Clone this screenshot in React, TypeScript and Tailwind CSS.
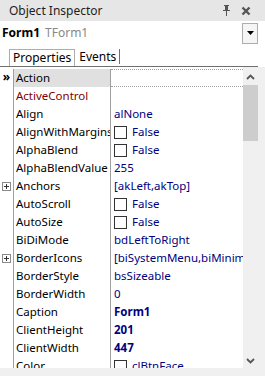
import React from 'react';

type Row = {
  name: string;
  value?: string;
  kind?: 'text' | 'check' | 'bold' | 'color';
  gutter?: 'arrow' | 'plus';
  nameClass?: string;
  selected?: boolean;
};

const rows: Row[] = [
  { name: 'Action', gutter: 'arrow', selected: true },
  { name: 'ActiveControl', nameClass: 'text-[#800000]' },
  { name: 'Align', value: 'alNone' },
  { name: 'AlignWithMargins', value: 'False', kind: 'check' },
  { name: 'AlphaBlend', value: 'False', kind: 'check' },
  { name: 'AlphaBlendValue', value: '255' },
  { name: 'Anchors', value: '[akLeft,akTop]', gutter: 'plus' },
  { name: 'AutoScroll', value: 'False', kind: 'check' },
  { name: 'AutoSize', value: 'False', kind: 'check' },
  { name: 'BiDiMode', value: 'bdLeftToRight' },
  { name: 'BorderIcons', value: '[biSystemMenu,biMinimize,biMaximize]', gutter: 'plus' },
  { name: 'BorderStyle', value: 'bsSizeable' },
  { name: 'BorderWidth', value: '0' },
  { name: 'Caption', value: 'Form1', kind: 'bold' },
  { name: 'ClientHeight', value: '201', kind: 'bold' },
  { name: 'ClientWidth', value: '447', kind: 'bold' },
  { name: 'Color', value: 'clBtnFace', kind: 'color' },
];

function Gutter({ type }: { type?: Row['gutter'] }) {
  if (type === 'arrow')
    return <span className="text-[12px] leading-none text-black font-bold -mt-[2px]">»</span>;
  if (type === 'plus')
    return (
      <svg width="9" height="9" viewBox="0 0 9 9">
        <rect x="0.5" y="0.5" width="8" height="8" fill="#fff" stroke="#8a8a8a" />
        <path d="M2 4.5h5M4.5 2v5" stroke="#333" strokeWidth="1" />
      </svg>
    );
  return null;
}

function Value({ row }: { row: Row }) {
  if (!row.value) return null;
  if (row.kind === 'check' || row.kind === 'color')
    return (
      <span className="flex items-center gap-[5px]">
        <span className="w-[13px] h-[13px] border border-[#333] bg-white shrink-0" />
        <span>{row.value}</span>
      </span>
    );
  return <span className={row.kind === 'bold' ? 'font-bold' : ''}>{row.value}</span>;
}

export default function App() {
  return (
    <div
      className="w-[265px] h-[376px] overflow-hidden bg-white flex flex-col text-[11.5px] text-black"
      style={{ fontFamily: '"Segoe UI", "Noto Sans", Arial, sans-serif' }}
    >
      {/* title bar */}
      <div className="h-[21px] shrink-0 bg-[#e6e6e6] flex items-center pl-[9px] pr-[14px] text-[12px]">
        <span className="flex-1 text-[#1e1e1e]">Object Inspector</span>
        <svg width="9" height="11" viewBox="0 0 9 11" className="mr-[10px]">
          <path d="M2 0h5v1H6v4h2v1H5v5H4V6H1V5h2V1H2z" fill="#555" />
        </svg>
        <svg width="10" height="10" viewBox="0 0 10 10">
          <path d="M1.5 1.5l7 7M8.5 1.5l-7 7" stroke="#555" strokeWidth="2.4" />
        </svg>
      </div>

      {/* component combo */}
      <div className="h-[24px] shrink-0 flex items-center pl-[2px] text-[12px]">
        <span className="font-bold">Form1</span>
        <span className="ml-[5px] text-[#888]">TForm1</span>
        <span className="ml-auto mr-[7px] w-[16px] h-[21px] border border-[#adadad] bg-[#f5f5f5] flex items-center justify-center">
          <svg width="7" height="4" viewBox="0 0 7 4">
            <path d="M0 0h7L3.5 4z" fill="#000" />
          </svg>
        </span>
      </div>

      {/* tabs */}
      <div className="h-[22px] shrink-0 flex items-end border-b border-[#707070] mr-[7px] text-[12px]">
        <div className="ml-[9px] h-[17px] px-[3px] border border-b-0 border-[#adadad] flex items-center leading-none">
          Properties
        </div>
        <div className="h-[15px] pl-[4px] pr-[3px] border-r border-[#707070] flex items-center leading-none mb-[2px]">
          Events
        </div>
      </div>

      {/* grid */}
      <div className="flex flex-1 min-h-0">
        <div className="flex-1 pt-[2px] overflow-hidden">
          {rows.map((r) => (
            <div key={r.name} className="h-[18px] flex">
              <div className="w-[14px] shrink-0 border-r border-[#a0a0a0] flex items-center justify-center">
                <Gutter type={r.gutter} />
              </div>
              <div
                className={`w-[97px] shrink-0 border-r border-[#a0a0a0] pl-[2px] flex items-center whitespace-nowrap overflow-hidden ${
                  r.selected ? 'bg-[#e0e0e0]' : ''
                } ${r.nameClass ?? ''}`}
              >
                {r.name}
              </div>
              <div
                className={`flex-1 pl-[3px] flex items-center whitespace-nowrap overflow-hidden text-[#000080] ${
                  r.selected ? 'border-y border-dotted border-[#a0a0a0]' : ''
                }`}
              >
                <Value row={r} />
              </div>
            </div>
          ))}
        </div>

        {/* scrollbar */}
        <div className="w-[22px] shrink-0 bg-[#f0f0f0] flex flex-col">
          <div className="w-[15px] flex flex-col items-center flex-1 pt-[7px]">
            <svg width="9" height="6" viewBox="0 0 9 6">
              <path d="M1 5l3.5-3.5L8 5" stroke="#555" strokeWidth="1.8" fill="none" />
            </svg>
            <div className="mt-[5px] w-[15px] h-[56px] bg-[#cdcdcd]" />
            <div className="flex-1" />
            <svg width="9" height="6" viewBox="0 0 9 6" className="mb-[4px]">
              <path d="M1 1l3.5 3.5L8 1" stroke="#555" strokeWidth="1.8" fill="none" />
            </svg>
          </div>
        </div>
      </div>

      <div className="h-[8px] shrink-0 bg-[#f0f0f0]" />
    </div>
  );
}
